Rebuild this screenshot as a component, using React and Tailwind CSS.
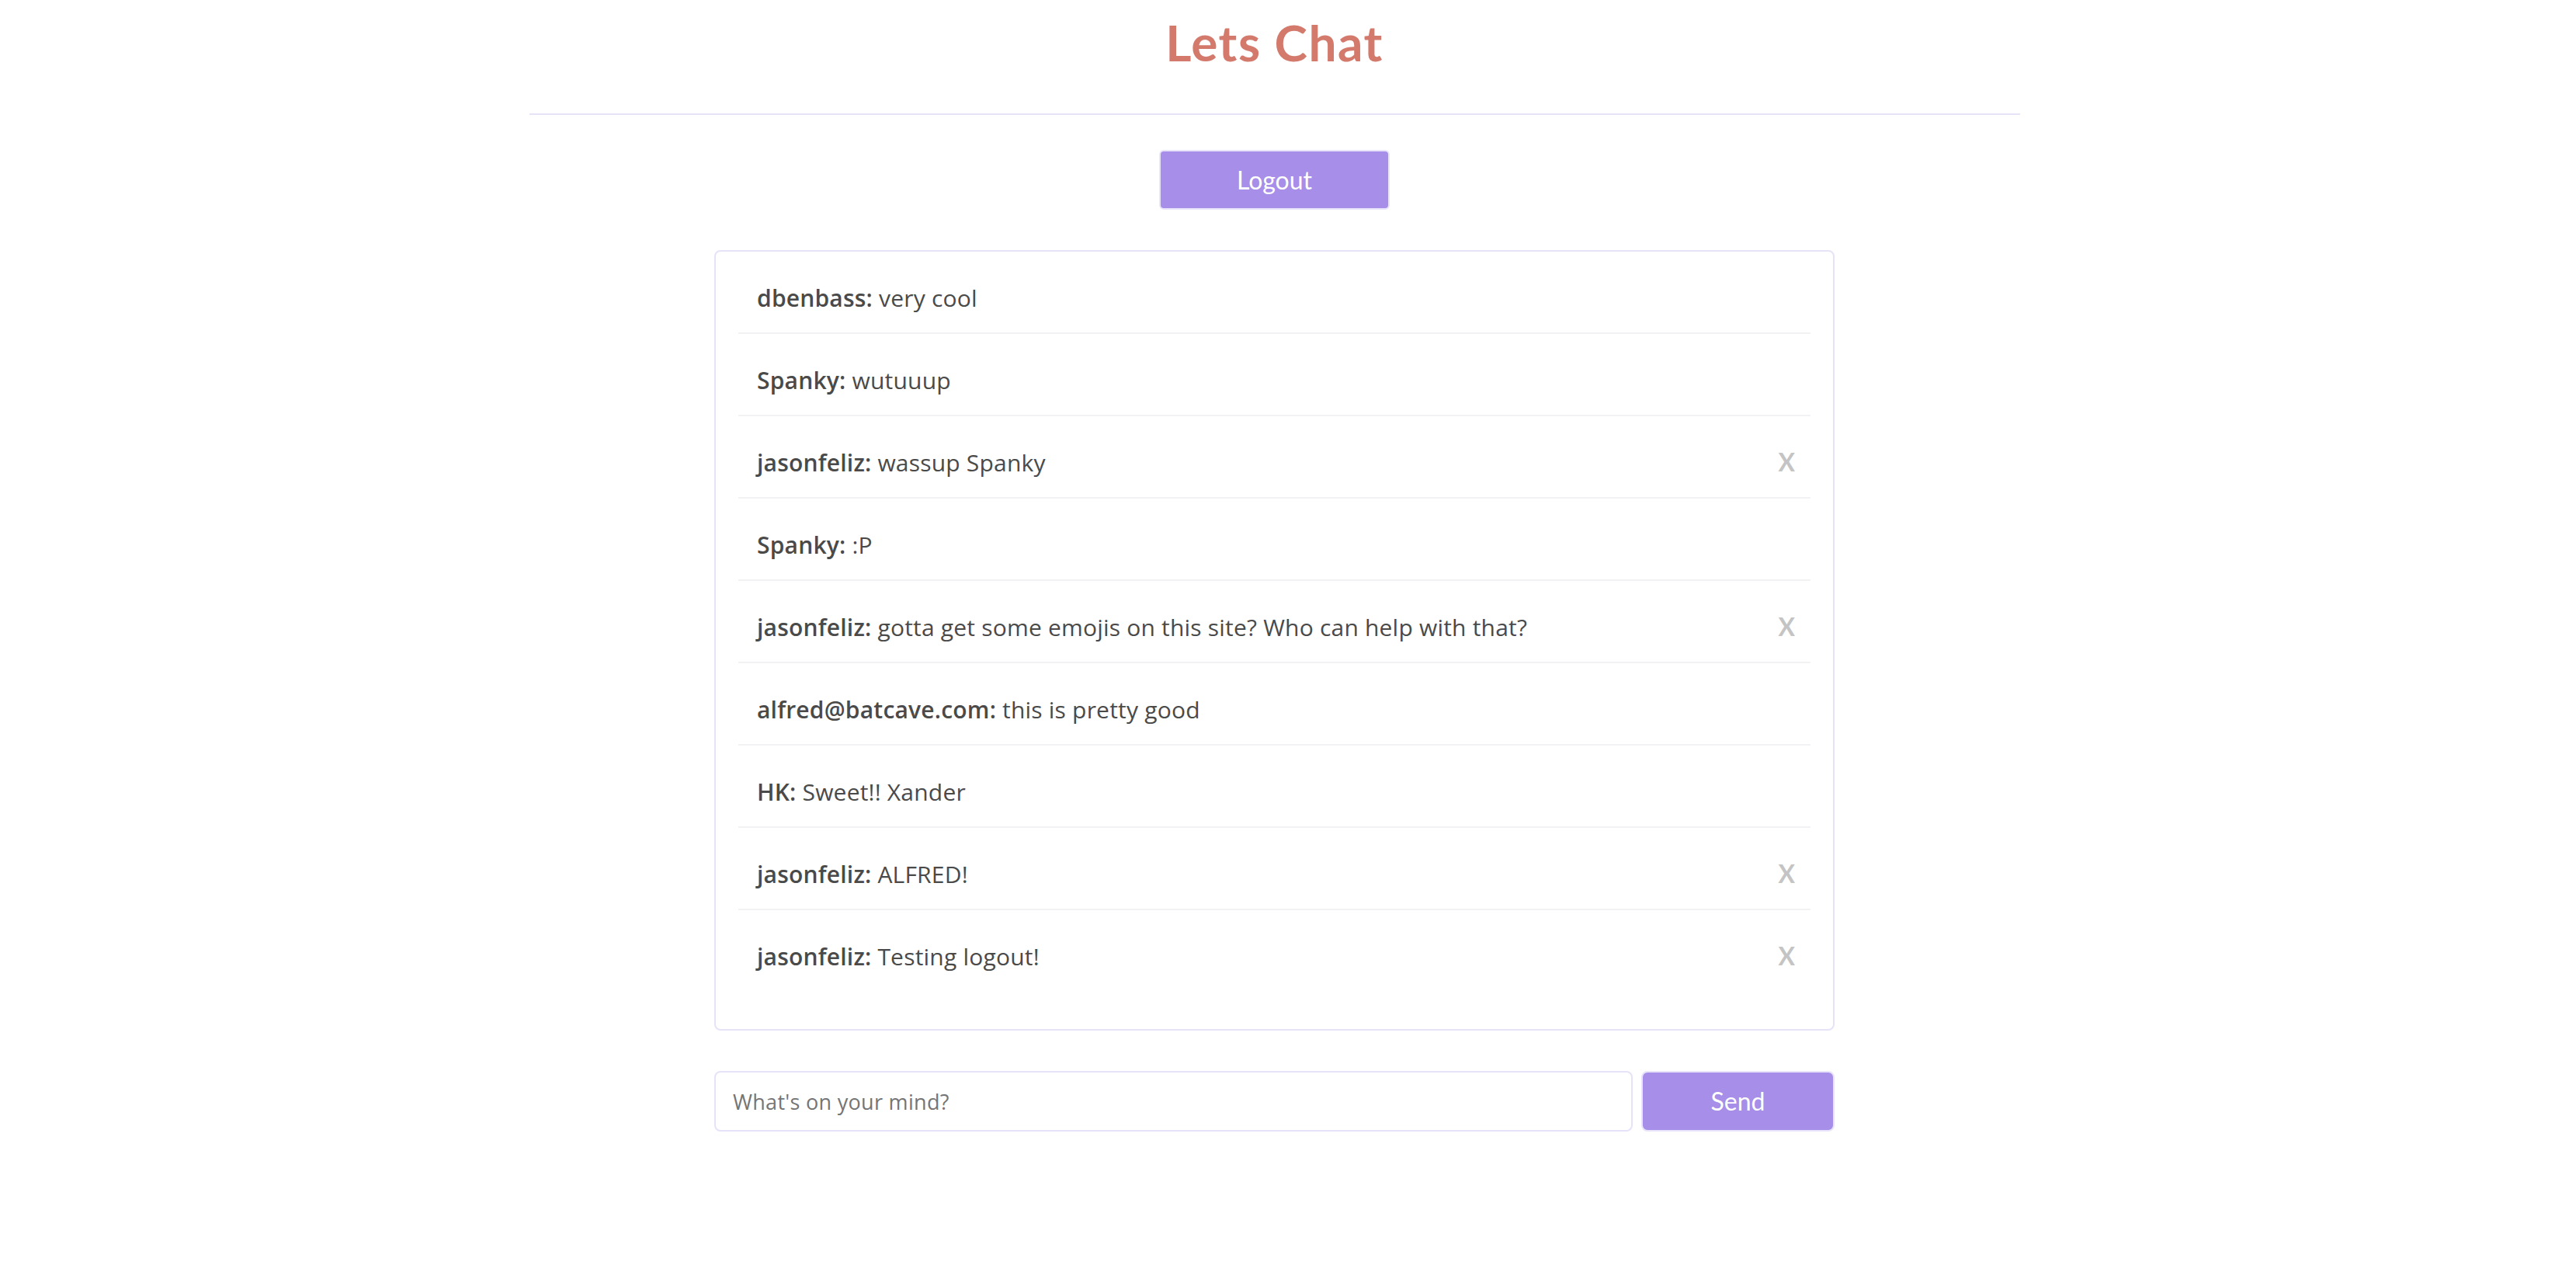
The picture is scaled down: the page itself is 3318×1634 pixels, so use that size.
import React, { useState } from 'react';

const initialMessages = [
  { id: 1, user: 'dbenbass', text: 'very cool' },
  { id: 2, user: 'Spanky', text: 'wutuuup' },
  { id: 3, user: 'jasonfeliz', text: 'wassup Spanky' },
  { id: 4, user: 'Spanky', text: ':P' },
  { id: 5, user: 'jasonfeliz', text: 'gotta get some emojis on this site? Who can help with that?' },
  { id: 6, user: 'alfred@batcave.com', text: 'this is pretty good' },
  { id: 7, user: 'HK', text: 'Sweet!! Xander' },
  { id: 8, user: 'jasonfeliz', text: 'ALFRED!' },
  { id: 9, user: 'jasonfeliz', text: 'Testing logout!' },
];

const currentUser = 'jasonfeliz';

function MessageRow({ message, last, onDelete }) {
  const mine = message.user === currentUser;
  return (
    <li
      className={`flex items-baseline justify-between h-[106px] pt-[37px] pl-[24px] pr-[20px] ${
        last ? '' : 'border-b-2 border-[#f2f2f5]'
      }`}
    >
      <span className="font-['Open_Sans',sans-serif] text-[30px] leading-[1.5] tracking-[0.2px] text-[#4a4a4a]">
        <b className="font-semibold">{message.user}:</b> {message.text}
      </span>
      {mine && (
        <button
          onClick={() => onDelete(message.id)}
          className="text-[32px] leading-none font-bold text-[#c4c4c4]"
        >
          X
        </button>
      )}
    </li>
  );
}

export default function App() {
  const [messages, setMessages] = useState(initialMessages);
  const [draft, setDraft] = useState('');

  function handleSend(e) {
    e.preventDefault();
    if (!draft.trim()) return;
    setMessages([...messages, { id: Date.now(), user: currentUser, text: draft }]);
    setDraft('');
  }

  return (
    <div className="min-h-screen bg-white pr-[35px] font-['Lato',sans-serif]">
      {/* Header */}
      <h1 className="pt-[23px] text-center text-[64px] leading-none font-bold tracking-[1.5px] text-[#d37a6c]">
        Lets Chat
      </h1>
      <div className="mx-auto mt-[59px] h-[2px] w-[1920px] bg-[#e6e3f8]" />

      <div className="mt-[45px] flex justify-center">
        <button className="h-[77px] w-[297px] rounded-[6px] border-2 border-[#e8e4fa] bg-[#a68ee9] text-[32px] text-white">
          Logout
        </button>
      </div>

      {/* Messages */}
      <ul className="mx-auto mt-[52px] w-[1443px] rounded-[8px] border-2 border-[#e6e3f8] px-[29px] pb-[47px]">
        {messages.map((m, i) => (
          <MessageRow
            key={m.id}
            message={m}
            last={i === messages.length - 1}
            onDelete={(id) => setMessages(messages.filter((x) => x.id !== id))}
          />
        ))}
      </ul>

      {/* Composer */}
      <form onSubmit={handleSend} className="mx-auto mt-[52px] flex w-[1443px] gap-[11px]">
        <input
          value={draft}
          onChange={(e) => setDraft(e.target.value)}
          placeholder="What's on your mind?"
          className="h-[78px] w-[1183px] rounded-[8px] border-2 border-[#e6e3f8] pl-[22px] font-['Open_Sans',sans-serif] text-[27px] tracking-[0.3px] text-[#4a4a4a] outline-none placeholder:text-[#757575]"
        />
        <button
          type="submit"
          className="h-[78px] flex-1 rounded-[8px] border-2 border-[#e8e4fa] bg-[#a68ee9] text-[32px] text-white"
        >
          Send
        </button>
      </form>
    </div>
  );
}
